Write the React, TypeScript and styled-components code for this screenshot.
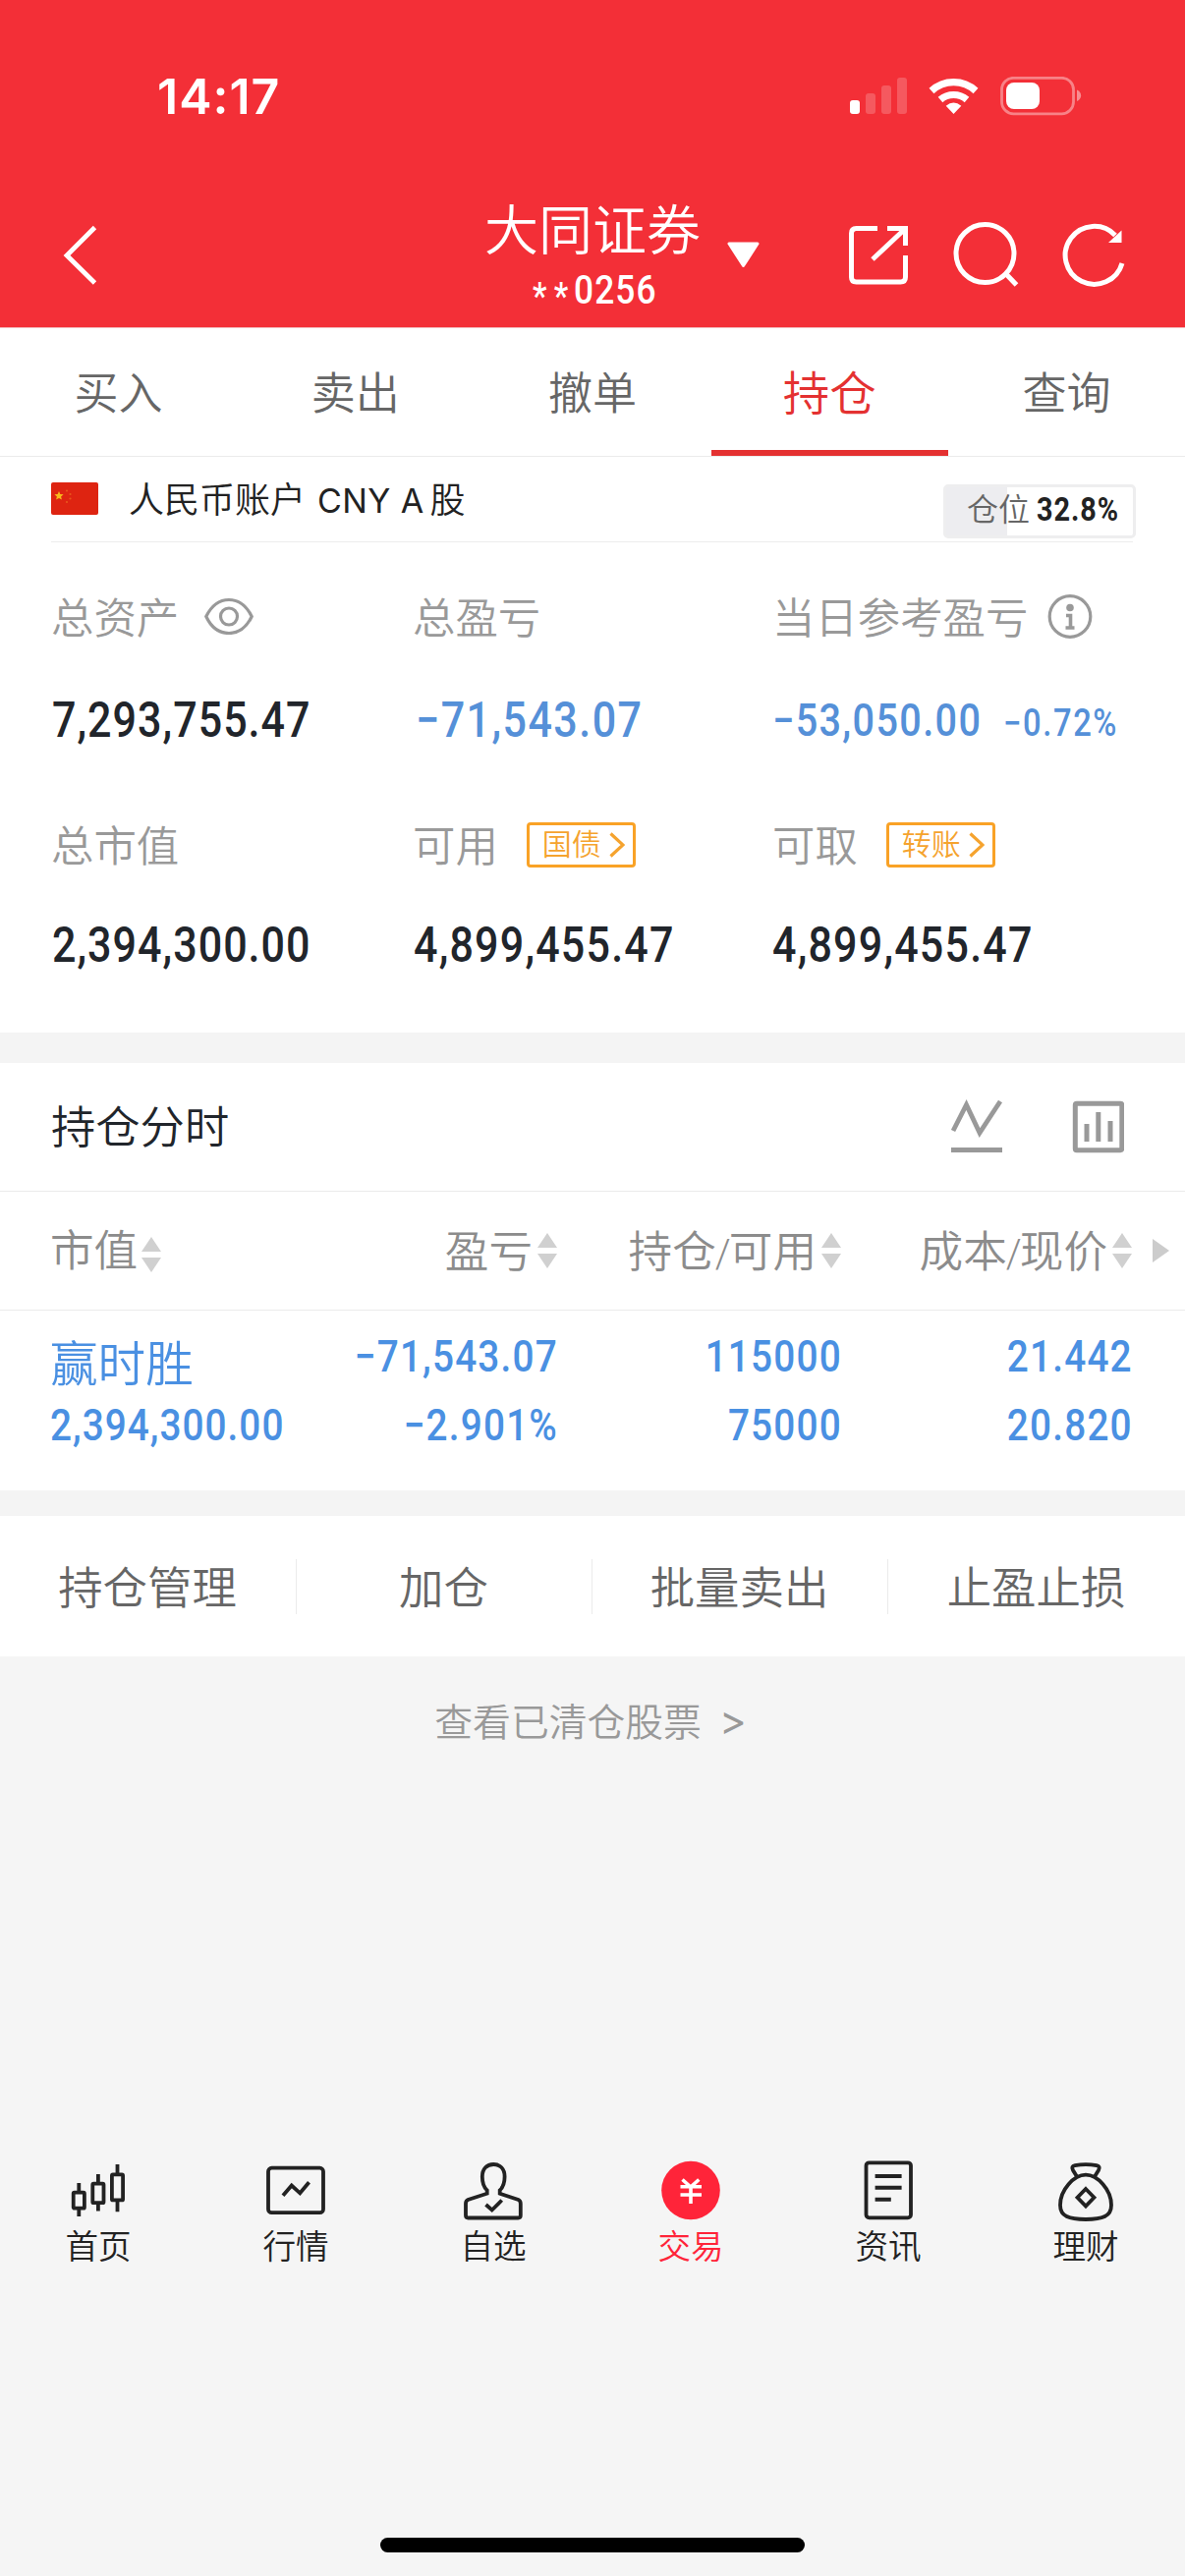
import React from "react";
import styled, { createGlobalStyle } from "styled-components";

const CJK = `"Noto Sans CJK SC", "Noto Sans", sans-serif`;
const LATIN = `Roboto, "Liberation Sans", sans-serif`;

const GlobalStyle = createGlobalStyle`
  * { box-sizing: border-box; }
  body { margin: 0; background: #f5f5f5; }
`;

const Page = styled.div`
  display: flex;
  flex-direction: column;
  width: 1206px;
  height: 2622px;
  background: #f5f5f5;
  font-family: ${CJK};
  font-weight: 350;
  line-height: 1;
  overflow: hidden;
`;

/* ---------- header ---------- */
const Header = styled.header`
  height: 334px;
  background: #f32f37;
  border-bottom: 1px solid #f3b9bb;
  color: #fff;
`;
const StatusBar = styled.div`
  display: flex;
  align-items: center;
  justify-content: space-between;
  height: 196px;
  padding: 0 105px 0 160px;
`;
const Clock = styled.span`
  font: 600 50px/1 Inter, ${LATIN};
  letter-spacing: 1px;
`;
const NavBar = styled.div`
  display: grid;
  grid-template-columns: 466px 274px 466px;
  height: 137px;
`;
const BackCell = styled.div`
  padding: 32px 0 0 63px;
`;
const TitleCell = styled.div`
  display: flex;
  flex-direction: column;
  align-items: center;
`;
const Title = styled.h1`
  margin: 5px 0 16px;
  font-size: 55px;
  font-weight: 350;
  line-height: 58px;
`;
const NavActions = styled.div`
  display: flex;
  padding-top: 26px;
`;

/* ---------- numerals ---------- */
const Num = styled.span<{
  $size: number;
  $color?: string;
  $weight?: number;
  $right?: boolean;
  $scale?: number;
  $gap?: number;
  $indent?: number;
}>`
  display: inline-block;
  margin-left: ${(p) => p.$indent ?? 0}px;
  font-family: ${LATIN};
  font-size: ${(p) => p.$size}px;
  font-weight: ${(p) => p.$weight ?? 500};
  line-height: 1;
  letter-spacing: ${(p) => p.$gap ?? 1.4}px;
  white-space: nowrap;
  color: ${(p) => p.$color ?? "#21252b"};
  transform: scaleX(${(p) => p.$scale ?? 0.86});
  transform-origin: ${(p) => (p.$right ? "right" : "left")} center;
`;
const Stars = styled.span`
  margin-right: -2px;
  font-size: 38px;
  line-height: 0;
  letter-spacing: 8.5px;
  vertical-align: -6px;
`;

/* ---------- tabs ---------- */
const Tabs = styled.nav`
  display: grid;
  grid-template-columns: repeat(5, 1fr);
  height: 131px;
  background: #fff;
  border-bottom: 1px solid #ebebeb;
`;
const Tab = styled.div<{ $active?: boolean }>`
  display: flex;
  align-items: center;
  justify-content: center;
  padding: ${(p) => (p.$active ? "3px 0 0" : "0 0 3px")};
  border-bottom: ${(p) => (p.$active ? "6px solid #e43131" : "none")};
  color: ${(p) => (p.$active ? "#e43131" : "#666")};
  font-size: ${(p) => (p.$active ? 47.5 : 45)}px;
`;

/* ---------- account ---------- */
const Account = styled.section`
  background: #fff;
  padding: 0 50px 0 52px;
`;
const AccountBar = styled.div`
  display: flex;
  height: 87px;
  margin-right: 3px;
  border-bottom: 1px solid #ededed;
`;
const FlagIcon = styled.svg`
  margin-top: 26px;
`;
const AccountName = styled.div`
  flex: 1;
  display: flex;
  align-items: baseline;
  margin-left: 31px;
  padding-top: 23px;
  color: #222;
  font-size: 36px;
  white-space: nowrap;
`;
const Latin = styled.span`
  font: 400 34px/1 Inter, ${LATIN};
  letter-spacing: 0.4px;
  margin: 0 6px 0 12px;
`;
const Position = styled.div`
  display: flex;
  align-items: center;
  width: 196px;
  height: 55px;
  margin: 28px -3px 0 0;
  padding: 0 0 4px 21px;
  border: 3px solid #eeeeef;
  border-radius: 5px;
  background: linear-gradient(to right, #ededf0 62px, #fff 62px);
  color: #666;
  font-size: 32px;
`;
const PositionLabel = styled.span`
  width: 75px;
  padding-bottom: 5px;
`;
const Summary = styled.div`
  display: grid;
  grid-template-columns: 368px 366px 370px;
  grid-template-rows: 80px 126px 132px 68px;
  padding: 37px 0 56px;
  align-items: center;
`;
const Label = styled.div<{ $gap?: number }>`
  display: flex;
  align-items: center;
  gap: ${(p) => p.$gap ?? 26}px;
  padding-bottom: 4px;
  color: #999;
  font-size: 43.4px;
  white-space: nowrap;
`;
const Value = styled.div`
  display: flex;
  align-items: baseline;
  padding-top: 1px;
  white-space: nowrap;
`;
const Tag = styled.span`
  display: flex;
  align-items: center;
  gap: 8px;
  width: 111px;
  height: 46px;
  margin: 1px 0 0 3px;
  padding: 0 0 5px 13px;
  border: 3px solid #f9a226;
  border-radius: 4px;
  color: #f5a32e;
  font-size: 30px;
`;
const TagArrow = styled.svg`
  margin-top: 5px;
`;

const Band = styled.div<{ $h: number }>`
  height: ${(p) => p.$h}px;
  background: #f4f4f4;
`;

/* ---------- holdings ---------- */
const Card = styled.section`
  background: #fff;
`;
const CardHead = styled.div`
  display: flex;
  align-items: center;
  height: 131px;
  padding: 0 62px 2px 52px;
  border-bottom: 1px solid #ebebeb;
`;
const CardTitle = styled.h2`
  flex: 1;
  margin: 0;
  padding-bottom: 2px;
  color: #21252b;
  font-size: 45.3px;
  font-weight: 350;
`;
const Columns = styled.div`
  display: grid;
  grid-template-columns: 240px 276px 289px 296px 38px;
  padding-left: 51px;
`;
const ColumnHead = styled(Columns)`
  height: 121px;
  padding-bottom: 6px;
  align-items: center;
  border-bottom: 1px solid #ebebeb;
  color: #8c8c8c;
  font-size: 44.6px;
`;
const HeadCell = styled.div<{ $right?: boolean }>`
  display: flex;
  align-items: center;
  justify-content: ${(p) => (p.$right ? "flex-end" : "flex-start")};
  gap: ${(p) => (p.$right ? 5 : 4)}px;
  white-space: nowrap;
`;
const HeadText = styled.span`
  height: 45px;
  line-height: 45px;
`;
const Slash = styled.span`
  display: inline-block;
  width: 13px;
  font: 300 40px/1 ${LATIN};
  text-indent: -1px;
`;
const SortIcon = styled.svg<{ $drop: number }>`
  margin-top: ${(p) => p.$drop}px;
`;
const MoreIcon = styled.svg`
  margin: 5px 0 0 21px;
`;
const HoldingRow = styled(Columns)`
  grid-auto-rows: 70px;
  align-items: center;
  height: 183px;
  padding-top: 11px;
`;
const StockName = styled.div`
  padding-top: 11px;
  color: #4a90e2;
  font-size: 48.6px;
  white-space: nowrap;
`;
const Cell = styled.div<{ $right?: boolean }>`
  display: flex;
  justify-content: ${(p) => (p.$right ? "flex-end" : "flex-start")};
  margin-right: -1px;
`;

/* ---------- actions ---------- */
const Actions = styled.div`
  display: grid;
  grid-template-columns: 301px 301px 301px 303px;
  align-items: center;
  height: 143px;
  background: #fff;
`;
const Action = styled.div`
  display: flex;
  align-items: center;
  justify-content: center;
  height: 56px;
  padding: 0 1px 1px 0;
  color: #666;
  font-size: 45.4px;
  & + & { border-left: 1px solid #ebebeb; }
`;
const ClearedLink = styled.div`
  display: flex;
  justify-content: center;
  align-items: center;
  gap: 18px;
  height: 132px;
  padding: 0 4px 3px 0;
  color: #999;
  font-size: 38.8px;
`;
const Arrow = styled.span`
  font: 400 42px/1 Inter, ${LATIN};
`;

/* ---------- bottom bar ---------- */
const BottomBar = styled.nav`
  display: grid;
  grid-template-columns: repeat(6, 201px);
  height: 157px;
  margin-top: 358px;
`;
const BottomItem = styled.div<{ $active?: boolean }>`
  display: flex;
  flex-direction: column;
  align-items: center;
  padding: 19px 1px 0 0;
  color: ${(p) => (p.$active ? "#ff2439" : "#222")};
  font-size: 33.6px;
`;
const BottomLabel = styled.span`
  margin-top: 1px;
  line-height: 38px;
`;
const HomeIndicator = styled.div`
  width: 432px;
  height: 15px;
  margin: auto auto 24px;
  border-radius: 8px;
  background: #000;
`;

/* ---------- icons ---------- */
const StatusIcons = () => (
  <svg width="236" height="40" viewBox="865 78 236 40" fill="#fff">
    <rect x="865" y="102" width="10" height="14" rx="3" />
    <g opacity="0.2">
      <rect x="881" y="95" width="10" height="21" rx="3" />
      <rect x="897" y="87" width="10" height="29" rx="3" />
      <rect x="913" y="79" width="10" height="37" rx="3" />
    </g>
    <g fill="none" stroke="#fff">
      <path d="M948 92.5a33 33 0 0 1 45 0" strokeWidth="7.2" />
      <path d="M957 101.5a20.500 20.500 0 0 1 27 0" strokeWidth="7" />
    </g>
    <path d="M970.500 116l-7.800-8.200q7.800-6.800 15.600 0z" />
    <rect x="1019.500" y="79.300" width="73" height="36.500" rx="12" fill="none" stroke="#fff" strokeOpacity="0.4" strokeWidth="2.800" />
    <rect x="1024" y="84" width="34" height="27" rx="8" />
    <path d="M1096 91.500c5.500 2.500 5.500 9 0 11.500z" opacity="0.45" />
  </svg>
);
const BackIcon = () => (
  <svg width="40" height="64" viewBox="63 228 40 64" fill="none" stroke="#fff" strokeWidth="4.800">
    <path d="M96.500 231.500L68 260l28.500 28" />
  </svg>
);
const HeaderIcons = () => (
  <svg width="410" height="72" viewBox="740 222 410 72" fill="none" stroke="#fff" strokeWidth="5">
    <path d="M742 248h29l-14.500 22.500z" fill="#fff" strokeWidth="3" strokeLinejoin="round" />
    <path d="M893 232.500h-21.500q-5 0-5 5v44.500q0 5 5 5h45q5 0 5-5v-22" />
    <path d="M903 232.500h18.500v17.500M888 264l32-30" />
    <circle cx="1002.500" cy="258" r="29.500" />
    <path d="M1023.500 278.500l11 11.500" />
    <path d="M1142 268a29.500 29.500 0 1 1-7-28.500" />
    <path d="M1141.500 234.500v12.500h-13.500z" fill="#fff" stroke="none" />
  </svg>
);
const Flag = () => (
  <FlagIcon width="48" height="33" viewBox="0 0 48 33">
    <rect width="48" height="33" rx="2" fill="#de2411" />
    <path d="M8 9l1.300 3.100 3.300.200-2.500 2.100.800 3.200L8 15.900l-2.900 1.700.800-3.200-2.500-2.100 3.300-.200z" fill="#f8b81c" />
    <g fill="#e8561c">
      <circle cx="16" cy="8.500" r="1.100" />
      <circle cx="19.500" cy="12" r="1.100" />
      <circle cx="19.500" cy="16.500" r="1.100" />
      <circle cx="16" cy="20" r="1.100" />
    </g>
  </FlagIcon>
);
const EyeIcon = () => (
  <svg width="50" height="38" viewBox="0 -1 50 38" fill="none" stroke="#999" strokeWidth="3.200">
    <path d="M1.800 18.500C7 8 15 1.500 25 1.500s18 6.500 23.200 17C43 29.500 35 35.500 25 35.500S7 29.500 1.800 18.500z" />
    <circle cx="25" cy="18.500" r="8.500" />
  </svg>
);
const InfoIcon = () => (
  <svg width="46" height="46" viewBox="0 -0.500 46 46" fill="none" stroke="#999" strokeWidth="3.200">
    <circle cx="23" cy="23" r="20.800" />
    <circle cx="23" cy="14" r="3.800" fill="#999" stroke="none" />
    <path d="M19 22h4.500v12M18.500 34.500h9" strokeWidth="3.600" />
  </svg>
);
const TagChevron = () => (
  <TagArrow width="16" height="26" viewBox="0 0 16 26" fill="none" stroke="#f5a32e" strokeWidth="3.200">
    <path d="M1.500 1.500L14 13 1.500 24.500" />
  </TagArrow>
);
const ChartIcons = () => (
  <svg width="176" height="56" viewBox="968 1118 176 56" fill="none" stroke="#999" strokeWidth="4.800">
    <path d="M970 1151l13.500-26.500L997 1153l21-32" />
    <path d="M968 1170.500h52" strokeWidth="5" />
    <rect x="1094.300" y="1123.200" width="47.500" height="47.500" rx="1.500" strokeWidth="5" />
    <path d="M1106 1144v18M1117.800 1132v30M1130 1141v21" strokeWidth="5" />
  </svg>
);
const Sort = ({ drop = 6 }: { drop?: number }) => (
  <SortIcon $drop={drop} width="20" height="36" viewBox="0 0 20 36" fill="#d0d0d0">
    <path d="M10 0l10 15H0zM10 36l10-15H0z" />
  </SortIcon>
);
const MoreColumns = () => (
  <MoreIcon width="17" height="24" viewBox="0 0 17 24" fill="#ccc">
    <path d="M0 0l17 12L0 24z" />
  </MoreIcon>
);

const NAV_ICONS: Record<string, React.ReactNode> = {
  首页: (
    <>
      <rect x="9.700" y="36.700" width="11.200" height="16" rx="1" />
      <path d="M15.300 27v9.500M15.300 53v8" />
      <rect x="29.300" y="27.700" width="11.200" height="19.500" rx="1" />
      <path d="M34.900 18v9.500M34.900 47.500v8" />
      <rect x="48.900" y="18.400" width="11.200" height="26" rx="1" />
      <path d="M54.500 8v10M54.500 45v11.300" />
    </>
  ),
  行情: (
    <>
      <rect x="7" y="11.700" width="56" height="45.500" rx="3.500" />
      <path d="M22 39.700l8.800-10.200 8.500 7.800 9.200-11" />
    </>
  ),
  自选: (
    <>
      <path d="M28.700 34.300C25 31 23.800 26.500 23.800 20.500C23.800 12.500 28.500 8 35.200 8s11.400 4.500 11.400 12.500c0 6-1.200 10.500-4.900 13.800v3.400L60.500 44q2.300 1 2.300 4v12q0 2.500-2.500 2.500H9.500Q7 62.500 7 60V48q0-3 2.300-4L28.700 37.700z" />
      <path d="M27.500 49l6.200 5.500 10-10" />
    </>
  ),
  交易: (
    <>
      <circle cx="35" cy="34.500" r="29.800" fill="#ff2439" stroke="none" />
      <path d="M26.500 23.500l8.400 7.500 8.400-7.500M24.500 30.700H46M24.500 39H46M35 30v18" stroke="#fff" strokeWidth="3.600" />
    </>
  ),
  资讯: (
    <>
      <rect x="12.500" y="6.300" width="45.500" height="56" rx="3" />
      <path d="M21.600 20h27M21.600 31.700h27M21.600 43.700h16.200" strokeWidth="4" />
    </>
  ),
  理财: (
    <>
      <path d="M26 20.500l-4-6.500q-2.200-4 2-4.800 11-2.200 22 0 4.200.8 2 4.800l-4 6.500" />
      <path d="M35 18.700C47 18.700 61 34 61 49.500C61 61 52 64 35 64S9 61 9 49.500C9 34 23 18.700 35 18.700z" />
      <path d="M35 33l8.500 8.700L35 50.500l-8.500-8.800z" />
    </>
  ),
};

/* ---------- data ---------- */
const BLUE = "#5590d8";
const ROW_BLUE = "#4a90e2";
const tabs = ["买入", "卖出", "撤单", "持仓", "查询"];
const headings = [["盈亏"], ["持仓", "可用"], ["成本", "现价"]];
const actions = ["持仓管理", "加仓", "批量卖出", "止盈止损"];

const RowNum = ({ children }: { children: string }) => (
  <Cell $right>
    <Num $size={45} $color={ROW_BLUE} $right>{children}</Num>
  </Cell>
);

export default function App() {
  return (
    <Page>
      <GlobalStyle />
      <Header>
        <StatusBar>
          <Clock>14:17</Clock>
          <StatusIcons />
        </StatusBar>
        <NavBar>
          <BackCell><BackIcon /></BackCell>
          <TitleCell>
            <Title>大同证券</Title>
            <Num $size={41} $color="#fff" $indent={25}><Stars>**</Stars>0256</Num>
          </TitleCell>
          <NavActions><HeaderIcons /></NavActions>
        </NavBar>
      </Header>

      <Tabs>
        {tabs.map((t) => <Tab key={t} $active={t === "持仓"}>{t}</Tab>)}
      </Tabs>

      <Account>
        <AccountBar>
          <Flag />
          <AccountName>
            人民币账户<Latin>CNY A</Latin>股
          </AccountName>
          <Position>
            <PositionLabel>仓位</PositionLabel>
            <Num $size={33.5} $weight={700} $color="#222" $gap={1.1}>32.8%</Num>
          </Position>
        </AccountBar>
        <Summary>
          <Label>总资产<EyeIcon /></Label>
          <Label>总盈亏</Label>
          <Label $gap={20}>当日参考盈亏<InfoIcon /></Label>
          <Value><Num $size={50} $indent={1} $gap={1.2}>7,293,755.47</Num></Value>
          <Value><Num $size={50} $color={BLUE} $indent={3} $gap={1.7}>−71,543.07</Num></Value>
          <Value>
            <Num $size={46} $color={BLUE} $gap={1.6}>−53,050.00</Num>
            <Num $size={38} $color={BLUE} $gap={1.9} $indent={-13}>−0.72%</Num>
          </Value>
          <Label>总市值</Label>
          <Label>可用<Tag>国债<TagChevron /></Tag></Label>
          <Label>可取<Tag>转账<TagChevron /></Tag></Label>
          <Value><Num $size={50} $indent={1} $gap={1.2}>2,394,300.00</Num></Value>
          <Value><Num $size={50} $indent={1}>4,899,455.47</Num></Value>
          <Value><Num $size={50}>4,899,455.47</Num></Value>
        </Summary>
      </Account>

      <Band $h={31} />

      <Card>
        <CardHead>
          <CardTitle>持仓分时</CardTitle>
          <ChartIcons />
        </CardHead>
        <ColumnHead>
          <HeadCell>市值<Sort drop={13} /></HeadCell>
          {headings.map(([first, second]) => (
            <HeadCell key={first} $right>
              <HeadText>{first}{second && <><Slash>/</Slash>{second}</>}</HeadText>
              <Sort />
            </HeadCell>
          ))}
          <MoreColumns />
        </ColumnHead>
        <HoldingRow>
          <StockName>赢时胜</StockName>
          <RowNum>−71,543.07</RowNum>
          <RowNum>115000</RowNum>
          <RowNum>21.442</RowNum>
          <span />
          <Cell><Num $size={45} $color={ROW_BLUE} $gap={1.2}>2,394,300.00</Num></Cell>
          <RowNum>−2.901%</RowNum>
          <RowNum>75000</RowNum>
          <RowNum>20.820</RowNum>
        </HoldingRow>
      </Card>

      <Band $h={26} />

      <Actions>
        {actions.map((a) => <Action key={a}>{a}</Action>)}
      </Actions>
      <ClearedLink>查看已清仓股票<Arrow>&gt;</Arrow></ClearedLink>

      <BottomBar>
        {Object.entries(NAV_ICONS).map(([name, icon]) => (
          <BottomItem key={name} $active={name === "交易"}>
            <svg width="70" height="70" viewBox="0 0 70 70" fill="none" stroke="#222" strokeWidth="3.800">
              {icon}
            </svg>
            <BottomLabel>{name}</BottomLabel>
          </BottomItem>
        ))}
      </BottomBar>
      <HomeIndicator />
    </Page>
  );
}
